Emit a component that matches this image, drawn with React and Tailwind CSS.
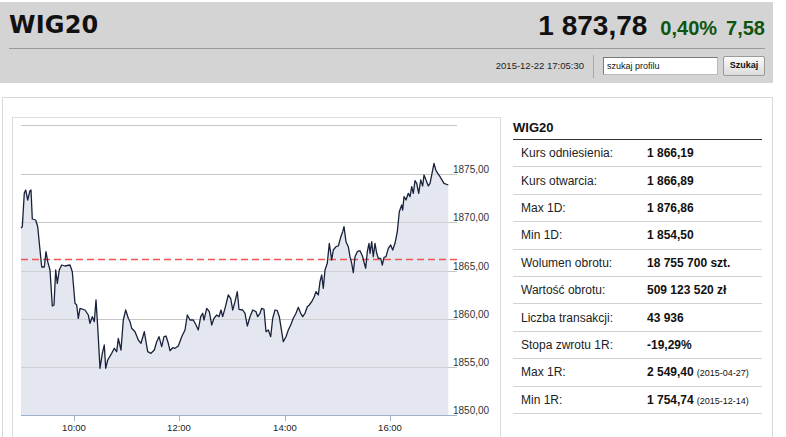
import { useMemo } from "react"

// punkty wykresu w układzie strony (x, y)
const POINTS = [
  [21, 228], [22.3, 226.7], [24.3, 193], [25.7, 190], [27.7, 200], [30, 190.7], [31, 190], [32.3, 219],
  [35.7, 220], [37.7, 226.7], [40, 250], [41.7, 267], [44.3, 267], [46, 251.7], [47.7, 261.7], [50, 270],
  [52.3, 306], [54, 305], [55.7, 270], [57.3, 283.3], [59.3, 270], [61.7, 265], [65, 266], [70, 265],
  [72.3, 271.7], [75, 303.3], [76.7, 305], [78.3, 318.3], [80, 308.3], [85, 310], [88.3, 315], [90, 323.3],
  [92.3, 316.7], [94.3, 321.7], [96, 300], [97.7, 326.7], [100, 368.3], [102.3, 353.3], [104.3, 345],
  [105.7, 368.3], [107.7, 360], [111.7, 353.3], [114.3, 348.3], [116.7, 351.7], [118.3, 338.3], [121, 350],
  [123.3, 320], [125.7, 310], [128.3, 318.3], [130, 321.7], [131.7, 328.3], [135, 331.7], [138.3, 340],
  [141, 343.3], [144.3, 331.7], [147.7, 351.7], [151, 353.3], [154.3, 350], [156.7, 341.7], [159, 336.7],
  [161.7, 346.7], [164, 336.7], [166, 336], [168.3, 343.3], [170, 350.7], [172.7, 347.7], [175, 348.3],
  [178.3, 346], [181.7, 336.7], [185, 330], [187.3, 315], [190, 320], [193.3, 320], [196, 325], [198.3, 330],
  [200.7, 316.7], [202.7, 313.3], [204, 320], [206.7, 308.3], [209.3, 311.7], [211.7, 325], [214, 318.3],
  [216.7, 315], [219, 316.7], [221, 310], [222.7, 316.7], [225, 308.3], [228.3, 295], [230.7, 298.3],
  [232.7, 310], [235, 301.7], [237.3, 291.7], [239, 309.3], [242.7, 310], [245, 313.3], [247.3, 326],
  [250, 316.7], [252.7, 310], [256, 311.7], [257.7, 316.7], [260, 313.3], [261.7, 308.3], [264, 309.3],
  [266, 331.7], [268.3, 330], [270.7, 336.7], [272.7, 318.3], [275, 310], [277.3, 310.7], [279.3, 316.7],
  [281.7, 331.7], [283.3, 341.7], [286, 336.7], [288.3, 330], [290.7, 325], [293.3, 318.3], [296, 313.3],
  [298.3, 307.3], [300.7, 313.3], [302.7, 316.7], [305, 313.3], [307.3, 306.7], [309.3, 305], [311.7, 301.7],
  [314, 297.3], [316, 291.7], [318.3, 295], [320, 281.7], [321.7, 275], [323.3, 288.3], [325, 270],
  [327.3, 263.3], [329.3, 243.3], [331.7, 260], [333.3, 250], [336, 246.7], [338.3, 246], [340.7, 237.3],
  [342.7, 231.7], [344, 226.7], [346, 241.7], [348.3, 246.7], [350, 256.7], [351.7, 263.3], [353.3, 272.7],
  [355, 256.7], [357.3, 251.7], [360, 250.7], [362.7, 256.7], [364.3, 263.3], [365.7, 268.3], [367.3, 251.7],
  [369, 243.3], [370, 253.3], [371.7, 241.7], [373.3, 256.7], [375, 243.3], [376.7, 253.3], [378.3, 258.3],
  [380.7, 258.3], [382.3, 265], [384, 257.3], [386, 256.7], [388.3, 248.3], [390.7, 245], [392.7, 250],
  [395, 243.3], [397.3, 231.7], [399.3, 211.7], [401.7, 205], [402.7, 210], [404, 196.7], [406, 200],
  [408.3, 193.3], [410, 196.7], [411.7, 186.7], [413.3, 193.3], [415, 180.7], [416.7, 183.3], [418.7, 193.3],
  [420.7, 180], [422.7, 186], [424, 175], [426, 180], [428.3, 186], [430, 183.3], [432, 173.3], [434, 163.3],
  [436, 170.7], [440, 176.7], [444, 183.3], [448.3, 185],
]

const GRID = [125, 174, 222, 271, 319, 367]
const Y_LABELS = [
  { y: 174, t: "1875,00" },
  { y: 222, t: "1870,00" },
  { y: 271, t: "1865,00" },
  { y: 319, t: "1860,00" },
  { y: 367, t: "1855,00" },
  { y: 415, t: "1850,00" },
]
const X_TICKS = [
  { x: 74, t: "10:00" },
  { x: 179, t: "12:00" },
  { x: 285, t: "14:00" },
  { x: 390, t: "16:00" },
]

const ROWS = [
  ["Kurs odniesienia:", "1 866,19"],
  ["Kurs otwarcia:", "1 866,89"],
  ["Max 1D:", "1 876,86"],
  ["Min 1D:", "1 854,50"],
  ["Wolumen obrotu:", "18 755 700 szt."],
  ["Wartość obrotu:", "509 123 520 zł"],
  ["Liczba transakcji:", "43 936"],
  ["Stopa zwrotu 1R:", "-19,29%"],
  ["Max 1R:", "2 549,40", "(2015-04-27)"],
  ["Min 1R:", "1 754,74", "(2015-12-14)"],
]

const IntradayChart = () => {
  const line = useMemo(() => POINTS.map(([x, y]) => `${x},${y}`).join(" "), [])
  const area = `${line} 448.3,415 21,415`

  return (
    <svg width="487" height="320" viewBox="13 118 487 320" className="block">
      {/* siatka */}
      {GRID.map((y) => (
        <line key={y} x1="21" x2="457" y1={y + 0.5} y2={y + 0.5} stroke="#c6c6c6" strokeWidth="1" />
      ))}
      <polygon points={area} fill="#e4e7ef" />
      {GRID.slice(1).map((y) => (
        <line key={"o" + y} x1="21" x2="457" y1={y + 0.5} y2={y + 0.5} stroke="#c6c6c6" strokeOpacity="0.7" strokeWidth="1" />
      ))}
      {/* kurs odniesienia */}
      <line x1="21" x2="457" y1="259.5" y2="259.5" stroke="#f05454" strokeWidth="1.5" strokeDasharray="7 4" />
      <polyline points={line} fill="none" stroke="#18223a" strokeWidth="1.3" strokeLinejoin="round" />
      {/* oś X */}
      <line x1="21" x2="457" y1="415.5" y2="415.5" stroke="#9db2cc" strokeWidth="1" />
      {X_TICKS.map((t) => (
        <g key={t.t}>
          <line x1={t.x + 0.5} x2={t.x + 0.5} y1="415" y2="421" stroke="#9db2cc" strokeWidth="1" />
          <text
            x={t.x}
            y="431"
            textAnchor="middle"
            fontSize="9.5"
            fill="#222"
            style={{ fontFamily: '"Liberation Sans", Arial, sans-serif' }}
          >
            {t.t}
          </text>
        </g>
      ))}
      {Y_LABELS.map((l) => (
        <text
          key={l.t}
          x="453"
          y={l.y - 1}
          fontSize="10"
          fill="#333"
          style={{ fontFamily: '"Liberation Sans", Arial, sans-serif' }}
        >
          {l.t}
        </text>
      ))}
    </svg>
  )
}

export default function App() {
  return (
    <div className="w-[786px] h-[437px] overflow-hidden bg-white font-['Liberation_Sans',Arial,sans-serif] text-[#111]">
      {/* NAGŁÓWEK */}
      <div className="mt-[2px] w-[773px] bg-[#d4d4d4] px-[9px] pr-[8px]">
        <div className="h-[47px] flex items-center justify-between border-b border-[#9a9a9a]">
          <h1 className="font-['DejaVu_Sans',Verdana,sans-serif] font-bold text-[24px] leading-none text-[#111] tracking-[0.2px]">
            WIG20
          </h1>
          <div className="flex items-baseline pt-[2px]">
            <span className="text-[28px] font-bold leading-none text-[#111]">1 873,78</span>
            <span className="ml-[13px] text-[20px] font-bold leading-none text-[#0f5410]">0,40%</span>
            <span className="ml-[9px] text-[20px] font-bold leading-none text-[#0f5410]">7,58</span>
          </div>
        </div>
        <div className="h-[34px] flex items-center justify-end">
          <span className="text-[9.5px] text-[#222]">2015-12-22 17:05:30</span>
          <div className="mx-[9px] h-[23px] w-px bg-[#a8a8a8]" />
          <input
            type="text"
            defaultValue="szukaj profilu"
            className="w-[115px] h-[18px] bg-white border border-[#7a7a7a] border-b-[#bbb] border-r-[#bbb] px-[3px] text-[9px] text-[#111] outline-none"
          />
          <button className="ml-[5px] w-[42px] h-[20px] rounded-[2px] border border-[#9a9a9a] bg-gradient-to-b from-[#fafafa] to-[#dcdcdc] text-[9px] font-bold text-[#111]">
            Szukaj
          </button>
        </div>
      </div>

      {/* PANEL */}
      <div className="mt-[14px] ml-[2px] w-[771px] h-[360px] border border-b-0 border-[#d8d8d8] pt-[19px] pl-[9px] flex items-start">
        <div className="w-[489px] h-[340px] border border-[#dcdcdc]">
          <IntradayChart />
        </div>

        <div className="ml-[12px] w-[249px]">
          <div className="h-[23px] flex items-center border-b border-[#333]">
            <span className="text-[13px] font-bold text-[#111]">WIG20</span>
          </div>
          {ROWS.map(([label, value, date]) => (
            <div key={label} className="h-[27.4px] flex items-center border-b border-[#d2d2d2] text-[12px]">
              <span className="w-[134px] pl-[8px] text-[#222]">{label}</span>
              <span className="font-bold text-[#111]">
                {value}
                {date && <span className="ml-[3px] text-[9px] font-normal">{date}</span>}
              </span>
            </div>
          ))}
        </div>
      </div>
    </div>
  )
}
